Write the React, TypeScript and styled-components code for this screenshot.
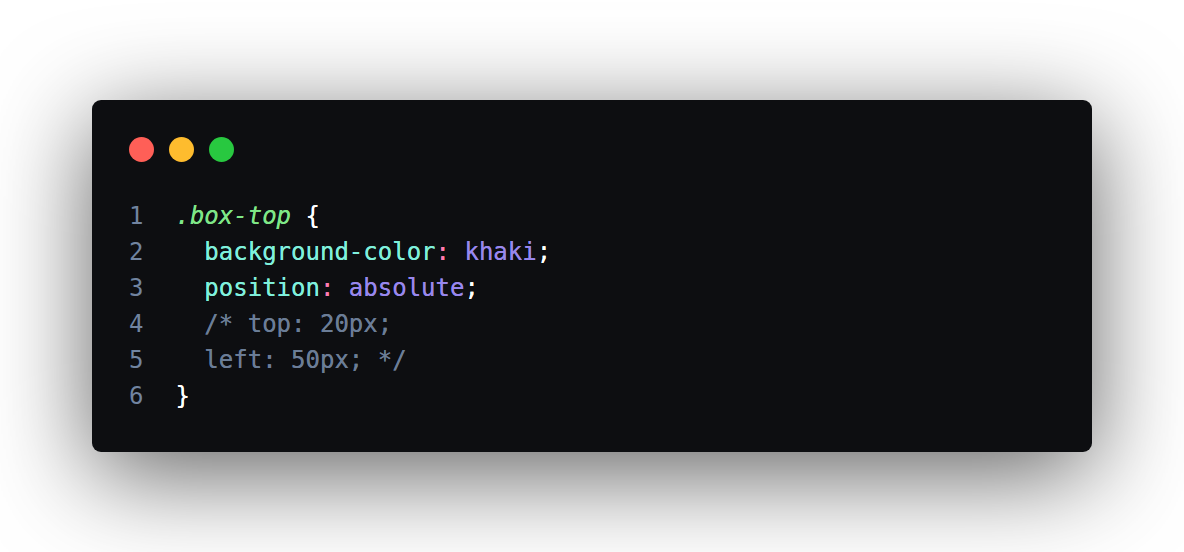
import React from "react";
import styled, { createGlobalStyle } from "styled-components";

const Global = createGlobalStyle`
  html, body { margin: 0; padding: 0; background: #ffffff; }
  body { font-family: "DejaVu Sans Mono", monospace; }
`;

const Page = styled.div`
  width: 1184px;
  height: 552px;
  box-sizing: border-box;
  padding: 100px 92px 0;
  overflow: hidden;
`;

const Card = styled.div`
  height: 352px;
  box-sizing: border-box;
  background: #0d0e11;
  border-radius: 9px;
  padding: 37px 37px 38px;
  box-shadow: 0 22px 100px rgba(0, 0, 0, 0.62);
  display: flex;
  flex-direction: column;
  gap: 36px;
`;

const Dots = styled.div`
  display: flex;
  gap: 15px;
  height: 25px;
`;

const Dot = styled.span<{ $c: string }>`
  width: 25px;
  height: 25px;
  border-radius: 50%;
  background: ${(p) => p.$c};
`;

const Code = styled.div`
  display: flex;
  flex-direction: column;
  font-family: "DejaVu Sans Mono", monospace;
  font-size: 24px;
  line-height: 36px;
`;

const Line = styled.div`
  display: flex;
  gap: 32px;
  white-space: pre;
`;

const Num = styled.span`
  color: #7184a0;
`;

const Tok = styled.span<{ $c: string; $i?: boolean }>`
  color: ${(p) => p.$c};
  font-style: ${(p) => (p.$i ? "italic" : "normal")};
  text-shadow: 0 0 0.4px ${(p) => p.$c};
`;

const C = {
  sel: "#7ee787",
  prop: "#7ff0dc",
  colon: "#ff7ab0",
  val: "#9887ee",
  punc: "#ffffff",
  com: "#6b7d97",
};

type T = [string, string, boolean?];

const lines: T[][] = [
  [[".box-top", C.sel, true], [" {", C.punc]],
  [["  background-color", C.prop], [":", C.colon], [" ", C.punc], ["khaki", C.val], [";", C.punc]],
  [["  position", C.prop], [":", C.colon], [" ", C.punc], ["absolute", C.val], [";", C.punc]],
  [["  /* top: 20px;", C.com]],
  [["  left: 50px; */", C.com]],
  [["}", C.punc]],
];

export default function App() {
  return (
    <>
      <Global />
      <Page>
        <Card>
          <Dots>
            <Dot $c="#ff5f57" />
            <Dot $c="#febc2e" />
            <Dot $c="#28c840" />
          </Dots>
          <Code>
            {lines.map((l, i) => (
              <Line key={i}>
                <Num>{i + 1}</Num>
                <span>
                  {l.map(([t, c, it], j) => (
                    <Tok key={j} $c={c} $i={it}>
                      {t}
                    </Tok>
                  ))}
                </span>
              </Line>
            ))}
          </Code>
        </Card>
      </Page>
    </>
  );
}
